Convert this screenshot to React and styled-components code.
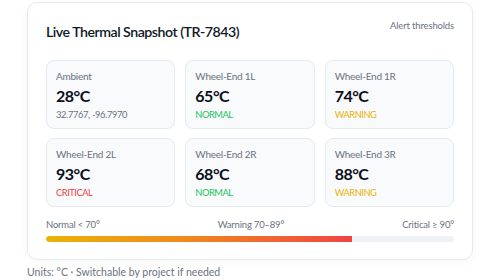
import React from "react";
import styled, { createGlobalStyle } from "styled-components";

const GlobalStyle = createGlobalStyle`
  html, body {
    margin: 0;
    padding: 0;
    background: #ffffff;
    font-family: Lato, "Noto Sans", sans-serif;
  }
`;

const Page = styled.div`
  width: 446px;
  margin: 0 auto;
  padding-top: 2px;
`;

const Card = styled.div`
  box-sizing: border-box;
  height: 258px;
  padding: 16px 18px 0 18px;
  background: #ffffff;
  border: 1px solid #e6e9ef;
  border-radius: 10px;
  box-shadow: 0 2px 8px rgba(15, 23, 42, 0.04);
`;

const Header = styled.div`
  display: flex;
  justify-content: space-between;
  align-items: flex-start;
  height: 41px;
`;

const Title = styled.h2`
  margin: 0;
  margin-top: 3px;
  font-size: 14.2px;
  line-height: 20px;
  font-weight: 600;
  letter-spacing: -0.5px;
  color: #111827;
`;

const HeaderLink = styled.span`
  margin-top: 1px;
  font-size: 9.5px;
  letter-spacing: -0.15px;
  color: #6b7280;
`;

const Grid = styled.div`
  display: grid;
  grid-template-columns: repeat(3, 1fr);
  gap: 9px 10px;
`;

const Tile = styled.div`
  box-sizing: border-box;
  height: 69px;
  padding: 8px 9px;
  background: #f8fafc;
  border: 1px solid #e5e9f0;
  border-radius: 8px;
  display: flex;
  flex-direction: column;
`;

const TileLabel = styled.div`
  font-size: 10px;
  letter-spacing: -0.25px;
  color: #6b7280;
  line-height: 14px;
`;

const TileValue = styled.div`
  font-size: 16px;
  font-weight: 700;
  letter-spacing: -0.5px;
  color: #0b0f19;
  line-height: 22px;
  margin-top: 2px;
`;

const statusColors = {
  NORMAL: "#22c55e",
  WARNING: "#eab308",
  CRITICAL: "#ef4444",
};

const TileSub = styled.div`
  font-size: 9.3px;
  line-height: 14px;
  margin-top: 1px;
  letter-spacing: ${(p) => (p.$status ? "-0.45px" : "-0.35px")};
  color: ${(p) => statusColors[p.$status] || "#6b7280"};
`;

const Legend = styled.div`
  display: flex;
  justify-content: space-between;
  margin-top: 11px;
  font-size: 9.5px;
  letter-spacing: -0.2px;
  color: #6b7280;
  line-height: 14px;
`;

const Track = styled.div`
  margin-top: 4px;
  height: 6px;
  border-radius: 3px;
  background: #eef2f6;
  overflow: hidden;
`;

const Fill = styled.div`
  height: 100%;
  border-radius: 3px 0 0 3px;
  background: linear-gradient(90deg, #eab308 0%, #f08a1c 45%, #ef4444 100%);
`;

const Footnote = styled.div`
  margin-top: 6px;
  font-size: 10.5px;
  color: #6b7280;
`;

const tiles = [
  { label: "Ambient", value: "28°C", sub: "32.7767, -96.7970" },
  { label: "Wheel-End 1L", value: "65°C", sub: "NORMAL", status: "NORMAL" },
  { label: "Wheel-End 1R", value: "74°C", sub: "WARNING", status: "WARNING" },
  { label: "Wheel-End 2L", value: "93°C", sub: "CRITICAL", status: "CRITICAL" },
  { label: "Wheel-End 2R", value: "68°C", sub: "NORMAL", status: "NORMAL" },
  { label: "Wheel-End 3R", value: "88°C", sub: "WARNING", status: "WARNING" },
];

export default function App() {
  const level = 75;

  return (
    <>
      <GlobalStyle />
      <Page>
        <Card>
          <Header>
            <Title>Live Thermal Snapshot (TR-7843)</Title>
            <HeaderLink>Alert thresholds</HeaderLink>
          </Header>
          <Grid>
            {tiles.map((t) => (
              <Tile key={t.label}>
                <TileLabel>{t.label}</TileLabel>
                <TileValue>{t.value}</TileValue>
                <TileSub $status={t.status}>{t.sub}</TileSub>
              </Tile>
            ))}
          </Grid>
          <Legend>
            <span>Normal &lt; 70°</span>
            <span>Warning 70–89°</span>
            <span>Critical ≥ 90°</span>
          </Legend>
          <Track>
            <Fill style={{ width: `${level}%` }} />
          </Track>
        </Card>
        <Footnote>Units: °C · Switchable by project if needed</Footnote>
      </Page>
    </>
  );
}
